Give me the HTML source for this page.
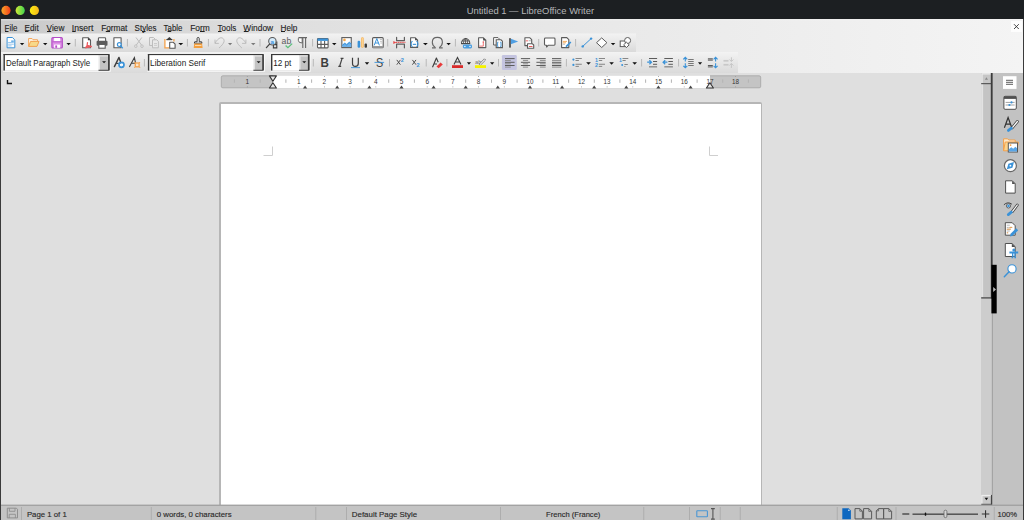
<!DOCTYPE html>
<html><head><meta charset="utf-8">
<style>
*{margin:0;padding:0;box-sizing:border-box}
html,body{width:1024px;height:520px;overflow:hidden;background:#dfdfdf;font-family:"Liberation Sans",sans-serif}
svg{position:absolute;left:0;top:0}
</style></head><body>
<svg width="1024" height="520" viewBox="0 0 1024 520" font-family="Liberation Sans" shape-rendering="auto">
<defs>
<linearGradient id="gMenu" x1="0" y1="0" x2="1" y2="0">
<stop offset="0" stop-color="#c9c9c9"/><stop offset="0.25" stop-color="#dedede"/><stop offset="0.6" stop-color="#e9e9e9"/><stop offset="1" stop-color="#f4f4f4"/>
</linearGradient>
<linearGradient id="gTb" x1="0" y1="0" x2="0" y2="1">
<stop offset="0" stop-color="#f3f3f3"/><stop offset="1" stop-color="#dadada"/>
</linearGradient>
<linearGradient id="gRed" x1="0" y1="0" x2="1" y2="0"><stop offset="0" stop-color="#f8a828"/><stop offset="1" stop-color="#f23c1c"/></linearGradient>
<linearGradient id="gGreen" x1="0" y1="0" x2="1" y2="0"><stop offset="0" stop-color="#d2ea38"/><stop offset="1" stop-color="#3fd34e"/></linearGradient>
<linearGradient id="gYellow" x1="0" y1="0" x2="1" y2="0"><stop offset="0" stop-color="#fbee10"/><stop offset="1" stop-color="#f6b71c"/></linearGradient>
</defs>
<rect x="0" y="0" width="1024" height="520" fill="#dfdfdf"/>
<rect x="0" y="0" width="1024" height="19" fill="#1c1f22"/>
<rect x="1" y="19" width="1022" height="54" fill="url(#gMenu)"/>
<rect x="1" y="33.5" width="635" height="18.5" fill="url(#gTb)"/>
<rect x="1" y="52" width="737" height="21" fill="url(#gTb)"/>
<rect x="0" y="19" width="1" height="501" fill="#3a3a3a"/>
<rect x="1023" y="19" width="1" height="501" fill="#3a3a3a"/>
<circle cx="6" cy="10.4" r="4.6" fill="url(#gRed)"/>
<circle cx="20.2" cy="10.4" r="4.6" fill="url(#gGreen)"/>
<circle cx="34.4" cy="10.4" r="4.6" fill="url(#gYellow)"/>
<text x="466.70" y="13.70" font-size="8.8" fill="#b4b6b8" font-weight="normal" font-family="Liberation Sans" textLength="127.40" lengthAdjust="spacingAndGlyphs" >Untitled 1 — LibreOffice Writer</text>
<text x="4.60" y="30.50" font-size="8.8" fill="#1e1e1e" font-weight="normal" font-family="Liberation Sans" textLength="12.80" lengthAdjust="spacingAndGlyphs" stroke="#1e1e1e" stroke-width="0.12">File</text>
<rect x="5.0" y="31" width="3.5" height="1" fill="#222"/>
<text x="24.60" y="30.50" font-size="8.8" fill="#1e1e1e" font-weight="normal" font-family="Liberation Sans" textLength="14.10" lengthAdjust="spacingAndGlyphs" stroke="#1e1e1e" stroke-width="0.12">Edit</text>
<rect x="25.0" y="31" width="3.5" height="1" fill="#222"/>
<text x="46.60" y="30.50" font-size="8.8" fill="#1e1e1e" font-weight="normal" font-family="Liberation Sans" textLength="17.80" lengthAdjust="spacingAndGlyphs" stroke="#1e1e1e" stroke-width="0.12">View</text>
<rect x="47.0" y="31" width="4.2" height="1" fill="#222"/>
<text x="71.80" y="30.50" font-size="8.8" fill="#1e1e1e" font-weight="normal" font-family="Liberation Sans" textLength="21.60" lengthAdjust="spacingAndGlyphs" stroke="#1e1e1e" stroke-width="0.12">Insert</text>
<rect x="72.2" y="31" width="3.5" height="1" fill="#222"/>
<text x="101.20" y="30.50" font-size="8.8" fill="#1e1e1e" font-weight="normal" font-family="Liberation Sans" textLength="26.20" lengthAdjust="spacingAndGlyphs" stroke="#1e1e1e" stroke-width="0.12">Format</text>
<rect x="105.8" y="31" width="4.2" height="1" fill="#222"/>
<text x="134.60" y="30.50" font-size="8.8" fill="#1e1e1e" font-weight="normal" font-family="Liberation Sans" textLength="21.80" lengthAdjust="spacingAndGlyphs" stroke="#1e1e1e" stroke-width="0.12">Styles</text>
<rect x="142.0" y="31" width="3.5" height="1" fill="#222"/>
<text x="163.60" y="30.50" font-size="8.8" fill="#1e1e1e" font-weight="normal" font-family="Liberation Sans" textLength="18.80" lengthAdjust="spacingAndGlyphs" stroke="#1e1e1e" stroke-width="0.12">Table</text>
<rect x="167.6" y="31" width="3.6" height="1" fill="#222"/>
<text x="190.20" y="30.50" font-size="8.8" fill="#1e1e1e" font-weight="normal" font-family="Liberation Sans" textLength="19.60" lengthAdjust="spacingAndGlyphs" stroke="#1e1e1e" stroke-width="0.12">Form</text>
<rect x="200.0" y="31" width="4.7" height="1" fill="#222"/>
<text x="217.60" y="30.50" font-size="8.8" fill="#1e1e1e" font-weight="normal" font-family="Liberation Sans" textLength="18.80" lengthAdjust="spacingAndGlyphs" stroke="#1e1e1e" stroke-width="0.12">Tools</text>
<rect x="218.0" y="31" width="3.6" height="1" fill="#222"/>
<text x="243.35" y="30.50" font-size="8.8" fill="#1e1e1e" font-weight="normal" font-family="Liberation Sans" textLength="29.75" lengthAdjust="spacingAndGlyphs" stroke="#1e1e1e" stroke-width="0.12">Window</text>
<rect x="243.8" y="31" width="4.8" height="1" fill="#222"/>
<text x="280.60" y="30.50" font-size="8.8" fill="#1e1e1e" font-weight="normal" font-family="Liberation Sans" textLength="16.80" lengthAdjust="spacingAndGlyphs" stroke="#1e1e1e" stroke-width="0.12">Help</text>
<rect x="281.0" y="31" width="4.0" height="1" fill="#222"/>
<rect x="219" y="102" width="543" height="405" rx="2" fill="#b6b6b6"/>
<rect x="221" y="104" width="540" height="401" fill="#ffffff"/>
<path d="M263.5 155.5H272.5V146.5" fill="none" stroke="#cfcfcf" stroke-width="1"/>
<path d="M718 155.5H709.5V146.5" fill="none" stroke="#cfcfcf" stroke-width="1"/>
<rect x="221.3" y="75.8" width="539.4" height="12" rx="1.5" fill="#c4c4c4" stroke="#9e9e9e" stroke-width="0.7"/>
<rect x="273" y="75.4" width="437" height="12.8" fill="#ffffff"/>
<rect x="233.9" y="79.4" width="1" height="3.4" fill="#b4b4b4"/>
<text x="245.50" y="83.80" font-size="7.2" fill="#333" font-weight="normal" font-family="Liberation Sans" textLength="3.60" lengthAdjust="spacingAndGlyphs" >1</text>
<rect x="246.9" y="76" width="0.8" height="1" fill="#9a9a9a"/><rect x="246.9" y="86.4" width="0.8" height="1" fill="#9a9a9a"/>
<rect x="259.7" y="79.4" width="1" height="3.4" fill="#b4b4b4"/>
<rect x="285.4" y="79.4" width="1" height="3.4" fill="#b4b4b4"/>
<text x="296.90" y="83.80" font-size="7.2" fill="#333" font-weight="normal" font-family="Liberation Sans" textLength="3.60" lengthAdjust="spacingAndGlyphs" >1</text>
<rect x="298.3" y="76" width="0.8" height="1" fill="#9a9a9a"/><rect x="298.3" y="86.4" width="0.8" height="1" fill="#9a9a9a"/>
<rect x="311.1" y="79.4" width="1" height="3.4" fill="#b4b4b4"/>
<text x="322.60" y="83.80" font-size="7.2" fill="#333" font-weight="normal" font-family="Liberation Sans" textLength="3.60" lengthAdjust="spacingAndGlyphs" >2</text>
<rect x="324.0" y="76" width="0.8" height="1" fill="#9a9a9a"/><rect x="324.0" y="86.4" width="0.8" height="1" fill="#9a9a9a"/>
<rect x="336.8" y="79.4" width="1" height="3.4" fill="#b4b4b4"/>
<text x="348.30" y="83.80" font-size="7.2" fill="#333" font-weight="normal" font-family="Liberation Sans" textLength="3.60" lengthAdjust="spacingAndGlyphs" >3</text>
<rect x="349.7" y="76" width="0.8" height="1" fill="#9a9a9a"/><rect x="349.7" y="86.4" width="0.8" height="1" fill="#9a9a9a"/>
<rect x="362.5" y="79.4" width="1" height="3.4" fill="#b4b4b4"/>
<text x="374.00" y="83.80" font-size="7.2" fill="#333" font-weight="normal" font-family="Liberation Sans" textLength="3.60" lengthAdjust="spacingAndGlyphs" >4</text>
<rect x="375.4" y="76" width="0.8" height="1" fill="#9a9a9a"/><rect x="375.4" y="86.4" width="0.8" height="1" fill="#9a9a9a"/>
<rect x="388.2" y="79.4" width="1" height="3.4" fill="#b4b4b4"/>
<text x="399.70" y="83.80" font-size="7.2" fill="#333" font-weight="normal" font-family="Liberation Sans" textLength="3.60" lengthAdjust="spacingAndGlyphs" >5</text>
<rect x="401.1" y="76" width="0.8" height="1" fill="#9a9a9a"/><rect x="401.1" y="86.4" width="0.8" height="1" fill="#9a9a9a"/>
<rect x="413.9" y="79.4" width="1" height="3.4" fill="#b4b4b4"/>
<text x="425.40" y="83.80" font-size="7.2" fill="#333" font-weight="normal" font-family="Liberation Sans" textLength="3.60" lengthAdjust="spacingAndGlyphs" >6</text>
<rect x="426.8" y="76" width="0.8" height="1" fill="#9a9a9a"/><rect x="426.8" y="86.4" width="0.8" height="1" fill="#9a9a9a"/>
<rect x="439.6" y="79.4" width="1" height="3.4" fill="#b4b4b4"/>
<text x="451.10" y="83.80" font-size="7.2" fill="#333" font-weight="normal" font-family="Liberation Sans" textLength="3.60" lengthAdjust="spacingAndGlyphs" >7</text>
<rect x="452.5" y="76" width="0.8" height="1" fill="#9a9a9a"/><rect x="452.5" y="86.4" width="0.8" height="1" fill="#9a9a9a"/>
<rect x="465.2" y="79.4" width="1" height="3.4" fill="#b4b4b4"/>
<text x="476.80" y="83.80" font-size="7.2" fill="#333" font-weight="normal" font-family="Liberation Sans" textLength="3.60" lengthAdjust="spacingAndGlyphs" >8</text>
<rect x="478.2" y="76" width="0.8" height="1" fill="#9a9a9a"/><rect x="478.2" y="86.4" width="0.8" height="1" fill="#9a9a9a"/>
<rect x="491.0" y="79.4" width="1" height="3.4" fill="#b4b4b4"/>
<text x="502.50" y="83.80" font-size="7.2" fill="#333" font-weight="normal" font-family="Liberation Sans" textLength="3.60" lengthAdjust="spacingAndGlyphs" >9</text>
<rect x="503.9" y="76" width="0.8" height="1" fill="#9a9a9a"/><rect x="503.9" y="86.4" width="0.8" height="1" fill="#9a9a9a"/>
<rect x="516.6" y="79.4" width="1" height="3.4" fill="#b4b4b4"/>
<text x="526.50" y="83.80" font-size="7.2" fill="#333" font-weight="normal" font-family="Liberation Sans" textLength="7.00" lengthAdjust="spacingAndGlyphs" >10</text>
<rect x="529.6" y="76" width="0.8" height="1" fill="#9a9a9a"/><rect x="529.6" y="86.4" width="0.8" height="1" fill="#9a9a9a"/>
<rect x="542.4" y="79.4" width="1" height="3.4" fill="#b4b4b4"/>
<text x="552.20" y="83.80" font-size="7.2" fill="#333" font-weight="normal" font-family="Liberation Sans" textLength="7.00" lengthAdjust="spacingAndGlyphs" >11</text>
<rect x="555.3" y="76" width="0.8" height="1" fill="#9a9a9a"/><rect x="555.3" y="86.4" width="0.8" height="1" fill="#9a9a9a"/>
<rect x="568.1" y="79.4" width="1" height="3.4" fill="#b4b4b4"/>
<text x="577.90" y="83.80" font-size="7.2" fill="#333" font-weight="normal" font-family="Liberation Sans" textLength="7.00" lengthAdjust="spacingAndGlyphs" >12</text>
<rect x="581.0" y="76" width="0.8" height="1" fill="#9a9a9a"/><rect x="581.0" y="86.4" width="0.8" height="1" fill="#9a9a9a"/>
<rect x="593.8" y="79.4" width="1" height="3.4" fill="#b4b4b4"/>
<text x="603.60" y="83.80" font-size="7.2" fill="#333" font-weight="normal" font-family="Liberation Sans" textLength="7.00" lengthAdjust="spacingAndGlyphs" >13</text>
<rect x="606.7" y="76" width="0.8" height="1" fill="#9a9a9a"/><rect x="606.7" y="86.4" width="0.8" height="1" fill="#9a9a9a"/>
<rect x="619.4" y="79.4" width="1" height="3.4" fill="#b4b4b4"/>
<text x="629.30" y="83.80" font-size="7.2" fill="#333" font-weight="normal" font-family="Liberation Sans" textLength="7.00" lengthAdjust="spacingAndGlyphs" >14</text>
<rect x="632.4" y="76" width="0.8" height="1" fill="#9a9a9a"/><rect x="632.4" y="86.4" width="0.8" height="1" fill="#9a9a9a"/>
<rect x="645.1" y="79.4" width="1" height="3.4" fill="#b4b4b4"/>
<text x="655.00" y="83.80" font-size="7.2" fill="#333" font-weight="normal" font-family="Liberation Sans" textLength="7.00" lengthAdjust="spacingAndGlyphs" >15</text>
<rect x="658.1" y="76" width="0.8" height="1" fill="#9a9a9a"/><rect x="658.1" y="86.4" width="0.8" height="1" fill="#9a9a9a"/>
<rect x="670.9" y="79.4" width="1" height="3.4" fill="#b4b4b4"/>
<text x="680.70" y="83.80" font-size="7.2" fill="#333" font-weight="normal" font-family="Liberation Sans" textLength="7.00" lengthAdjust="spacingAndGlyphs" >16</text>
<rect x="683.8" y="76" width="0.8" height="1" fill="#9a9a9a"/><rect x="683.8" y="86.4" width="0.8" height="1" fill="#9a9a9a"/>
<rect x="696.6" y="79.4" width="1" height="3.4" fill="#b4b4b4"/>
<text x="706.40" y="83.80" font-size="7.2" fill="#333" font-weight="normal" font-family="Liberation Sans" textLength="7.00" lengthAdjust="spacingAndGlyphs" >17</text>
<rect x="722.2" y="79.4" width="1" height="3.4" fill="#b4b4b4"/>
<text x="732.10" y="83.80" font-size="7.2" fill="#333" font-weight="normal" font-family="Liberation Sans" textLength="7.00" lengthAdjust="spacingAndGlyphs" >18</text>
<rect x="735.2" y="76" width="0.8" height="1" fill="#9a9a9a"/><rect x="735.2" y="86.4" width="0.8" height="1" fill="#9a9a9a"/>
<rect x="747.9" y="79.4" width="1" height="3.4" fill="#b4b4b4"/>
<path d="M303.0 88.4L305.1 85.6L307.2 88.4Z" fill="#444"/>
<path d="M335.1 88.4L337.2 85.6L339.3 88.4Z" fill="#444"/>
<path d="M367.3 88.4L369.4 85.6L371.5 88.4Z" fill="#444"/>
<path d="M399.4 88.4L401.5 85.6L403.6 88.4Z" fill="#444"/>
<path d="M431.5 88.4L433.6 85.6L435.7 88.4Z" fill="#444"/>
<path d="M463.6 88.4L465.7 85.6L467.8 88.4Z" fill="#444"/>
<path d="M495.7 88.4L497.8 85.6L499.9 88.4Z" fill="#444"/>
<path d="M527.9 88.4L530.0 85.6L532.1 88.4Z" fill="#444"/>
<path d="M560.0 88.4L562.1 85.6L564.2 88.4Z" fill="#444"/>
<path d="M592.1 88.4L594.2 85.6L596.3 88.4Z" fill="#444"/>
<path d="M624.2 88.4L626.3 85.6L628.4 88.4Z" fill="#444"/>
<path d="M656.3 88.4L658.4 85.6L660.5 88.4Z" fill="#444"/>
<path d="M688.5 88.4L690.6 85.6L692.7 88.4Z" fill="#444"/>
<path d="M269.4 75.9H276.4L272.9 81.3Z M269.4 88H276.4L272.9 82.8Z" fill="#e6e6e6" stroke="#333" stroke-width="1.1" stroke-linejoin="round"/>
<path d="M706.4 88H713.4L709.9 82.8Z" fill="#e6e6e6" stroke="#333" stroke-width="1.1" stroke-linejoin="round"/>
<path d="M7.5 80V83.5H12" fill="none" stroke="#111" stroke-width="1.4"/>
<rect x="981" y="73" width="12" height="432" fill="#cdcdcd"/>
<rect x="991.8" y="73" width="1.2" height="432" fill="#a4a4a4"/>
<rect x="981.2" y="73" width="11.4" height="225.7" fill="#c4c4c4"/>
<rect x="981.2" y="84" width="1.9" height="213" fill="#e2e2e2"/>
<rect x="981.2" y="297" width="10" height="1.7" fill="#6a6a6a"/>
<rect x="981.4" y="73.2" width="9.6" height="9.8" fill="#eeeeee"/><rect x="982.6" y="74.5" width="8.4" height="8.5" fill="#c6c6c6"/>
<rect x="981.2" y="83.1" width="10" height="1.1" fill="#505050"/>
<path d="M984.9 79.8L986.4 77.3L988 79.8Z" fill="#8a8a8a"/>
<rect x="990.8" y="73" width="1.8" height="225.7" fill="#3c3c3c"/>
<rect x="981.3" y="494.9" width="10.6" height="9.9" fill="#eeeeee"/><rect x="982.5" y="496.1" width="8.5" height="7.7" fill="#c8c8c8"/>
<rect x="981.3" y="503.8" width="10.6" height="1" fill="#333"/><rect x="990.9" y="494.9" width="1" height="9.9" fill="#333"/>
<path d="M984.6 497.8H988.2L986.4 500.2Z" fill="#111"/>
<rect x="993" y="73" width="30" height="432" fill="#c2c2c2"/>
<rect x="991.4" y="264.8" width="5.3" height="48.6" fill="#000"/>
<path d="M993.2 287L996 289.5L993.2 292Z" fill="#bbb"/>
<rect x="1" y="505" width="1022" height="15" fill="#c4c4c4"/>
<rect x="1" y="504.6" width="1022" height="1.3" fill="#a0a0a0"/>
<rect x="21.00" y="507" width="1" height="13" fill="#adadad"/>
<rect x="150.80" y="507" width="1" height="13" fill="#adadad"/>
<rect x="315.30" y="507" width="1" height="13" fill="#adadad"/>
<rect x="346.00" y="507" width="1" height="13" fill="#adadad"/>
<rect x="500.00" y="507" width="1" height="13" fill="#adadad"/>
<rect x="643.25" y="507" width="1" height="13" fill="#adadad"/>
<rect x="689.00" y="507" width="1" height="13" fill="#adadad"/>
<rect x="719.75" y="507" width="1" height="13" fill="#adadad"/>
<rect x="739.75" y="507" width="1" height="13" fill="#adadad"/>
<rect x="836.75" y="507" width="1" height="13" fill="#adadad"/>
<rect x="895.50" y="507" width="1" height="13" fill="#adadad"/>
<rect x="993.75" y="507" width="1" height="13" fill="#adadad"/>
<text x="26.90" y="517.10" font-size="7.9" fill="#2a2a2a" font-weight="normal" font-family="Liberation Sans" textLength="39.90" lengthAdjust="spacingAndGlyphs" stroke="#2a2a2a" stroke-width="0.14">Page 1 of 1</text>
<text x="156.80" y="517.10" font-size="7.9" fill="#2a2a2a" font-weight="normal" font-family="Liberation Sans" textLength="74.80" lengthAdjust="spacingAndGlyphs" stroke="#2a2a2a" stroke-width="0.14">0 words, 0 characters</text>
<text x="351.85" y="517.10" font-size="7.9" fill="#2a2a2a" font-weight="normal" font-family="Liberation Sans" textLength="65.30" lengthAdjust="spacingAndGlyphs" stroke="#2a2a2a" stroke-width="0.14">Default Page Style</text>
<text x="546.10" y="517.10" font-size="7.9" fill="#2a2a2a" font-weight="normal" font-family="Liberation Sans" textLength="54.30" lengthAdjust="spacingAndGlyphs" stroke="#2a2a2a" stroke-width="0.14">French (France)</text>
<text x="997.60" y="517.10" font-size="7.9" fill="#2a2a2a" font-weight="normal" font-family="Liberation Sans" textLength="19.55" lengthAdjust="spacingAndGlyphs" stroke="#2a2a2a" stroke-width="0.14">100%</text>
<g transform="translate(6.6,37)"><path d="M0.5 0.5H5.8L8.2 2.9V10.8H0.5Z" fill="#fff" stroke="#3a92d8" stroke-width="1"/><rect x="1.6" y="1.4" width="2.4" height="3.6" fill="#fff"/><path d="M1.5 5.5H7.2M1.5 7.2H7.2M1.5 8.9H5" stroke="#8cc0ea" stroke-width="0.9"/><rect x="4.6" y="3.4" width="2.6" height="1.6" fill="#6aaee6"/></g>
<path d="M19.90 42.90H24.30L22.10 45.30Z" fill="#111"/>
<g transform="translate(28,37.9)"><path d="M0.6 8.5V0.6H4L5 1.8H9.5V3.3" fill="#fdf2e2" stroke="#f3a860" stroke-width="1"/><path d="M0.6 8.5L2.6 3.5H11L9 8.5Z" fill="#f7d98a" stroke="#f0a050" stroke-width="1" stroke-linejoin="round"/></g>
<path d="M43.00 42.90H47.40L45.20 45.30Z" fill="#111"/>
<g transform="translate(51.3,37)"><rect x="0.6" y="0.6" width="10.4" height="10.4" rx="1" fill="#de93e6" stroke="#b34ec5" stroke-width="1.2"/><rect x="2.8" y="1" width="6" height="3.2" fill="#fff"/><rect x="2.8" y="7.6" width="6" height="3.2" fill="#fff"/><rect x="4" y="8.4" width="1.8" height="2.4" fill="#b34ec5"/><rect x="1.2" y="4.4" width="9.2" height="0.9" fill="#b34ec5"/></g>
<path d="M66.40 42.90H70.80L68.60 45.30Z" fill="#111"/>
<rect x="74.80" y="39" width="1" height="7.5" fill="#b8b8b8"/>
<g transform="translate(82.1,37.1)"><path d="M0.6 0.6H6L8.4 3V10.6H0.6Z" fill="#fff" stroke="#5b5b5b" stroke-width="1.1" stroke-linejoin="round"/><path d="M5.8 0.5V3.2H8.5Z" fill="#3d3d3d"/><path d="M5.4 5.6L5 8.4L3.6 10.6M5 8.4L9.2 9.4M3.6 10.6L9.2 9.4" fill="none" stroke="#ea5a5e" stroke-width="1.3" stroke-linecap="round" stroke-linejoin="round"/></g>
<g transform="translate(96.2,37.2)"><rect x="2.2" y="0.6" width="7.2" height="4" rx="0.8" fill="#fff" stroke="#5b5b5b" stroke-width="1.1"/><rect x="0.4" y="3.6" width="10.9" height="5" rx="1" fill="#5b5b5b"/><rect x="2.6" y="7.2" width="6.4" height="3.8" fill="#fff" stroke="#5b5b5b" stroke-width="1.1"/></g>
<g transform="translate(113.3,37.1)"><path d="M0.6 0.6H7.8V10.6H0.6Z" fill="#fff" stroke="#5b5b5b" stroke-width="1.1" stroke-linejoin="round"/><circle cx="6" cy="7.5" r="1.9" fill="#fff" stroke="#3a92d8" stroke-width="1.2"/><path d="M7.3 8.9L9.2 10.8" stroke="#3a92d8" stroke-width="1.3" stroke-linecap="round"/></g>
<rect x="126.90" y="39" width="1" height="7.5" fill="#b8b8b8"/>
<g transform="translate(134,37)"><path d="M2 0.5L7.5 8M7.8 0.5L2.3 8" stroke="#bdbdbd" stroke-width="1"/><circle cx="1.8" cy="9.2" r="1.3" fill="none" stroke="#bdbdbd" stroke-width="0.9"/><circle cx="8" cy="9.2" r="1.3" fill="none" stroke="#bdbdbd" stroke-width="0.9"/></g>
<g transform="translate(149,37)"><path d="M0.5 0.5H4.5L6 2V8.5H0.5Z" fill="none" stroke="#bdbdbd" stroke-width="1"/><path d="M3.5 2.8H7.8L9.4 4.4V10.8H3.5Z" fill="#e9e9e9" stroke="#bdbdbd" stroke-width="1"/><path d="M5 6.5H8M5 8.3H8" stroke="#bdbdbd" stroke-width="0.7"/></g>
<rect x="164.8" y="38.8" width="9.2" height="9.2" fill="#fff"/>
<path d="M164.9 38.9V47.9H169.4M173.9 38.9V41.6" fill="none" stroke="#f3a04a" stroke-width="1.3"/>
<path d="M166.6 39.6L169.4 37.1L172.2 39.6Z" fill="#3d3d3d"/><rect x="166.4" y="39" width="6" height="1.2" fill="#3d3d3d"/>
<path d="M169.7 42.3H173.3L175.1 44.1V48.3H169.7Z" fill="#fff" stroke="#555" stroke-width="1.1" stroke-linejoin="round"/>
<path d="M178.40 42.90H183.20L180.80 45.30Z" fill="#111"/>
<rect x="186.90" y="39" width="1" height="7.5" fill="#b8b8b8"/>
<g transform="translate(194,37)"><path d="M3.1 4.8V1.4Q3.1 0.5 4.15 0.5Q5.2 0.5 5.2 1.4V4.8H7.6L8 6.2H0.3L0.7 4.8Z" fill="#fff" stroke="#3d3d3d" stroke-width="1" stroke-linejoin="round"/><path d="M0.2 6.6H8.1L8.6 10.9H-0.3Z" fill="#f4a040"/><rect x="1" y="8" width="6.4" height="0.9" fill="#fde0b8"/></g>
<rect x="207.90" y="39" width="1" height="7.5" fill="#b8b8b8"/>
<g transform="translate(214,37)"><path d="M1 6.2C2.6 3.4 4.5 1.5 6.2 0.9C8.8 0.2 10.6 2.5 10 4.8C9.6 6.5 7.4 9 5 11" fill="none" stroke="#bdbdbd" stroke-width="1"/><path d="M1 2.6V6.4H4.8" fill="none" stroke="#bdbdbd" stroke-width="1"/></g>
<path d="M228.00 42.90H232.20L230.10 45.30Z" fill="#7a7a7a"/>
<g transform="translate(236.3,37)"><path d="M9.6 6.2C8 3.4 6.1 1.5 4.4 0.9C1.8 0.2 0 2.5 0.6 4.8C1 6.5 3.2 9 5.6 11" fill="none" stroke="#bdbdbd" stroke-width="1"/><path d="M9.6 2.6V6.4H5.8" fill="none" stroke="#bdbdbd" stroke-width="1"/></g>
<path d="M251.00 42.90H255.50L253.25 45.30Z" fill="#7a7a7a"/>
<rect x="259.50" y="39" width="1" height="7.5" fill="#b8b8b8"/>
<path d="M276.8 41.6V47.9H273.4V44.6H276.8" fill="none" stroke="#3d3d3d" stroke-width="1.1"/>
<circle cx="272.4" cy="41.2" r="3.7" fill="#d6ebfa" stroke="#555" stroke-width="1.05"/>
<text x="270.6" y="43.6" font-size="6.2" font-weight="bold" fill="#3a8fd8" font-family="Liberation Sans">a</text>
<path d="M269.6 44.1L266.4 47.6" stroke="#444" stroke-width="1.3" stroke-linecap="round"/>
<text x="281.6" y="43.8" font-size="9" fill="#5a5a5a" font-family="Liberation Sans" textLength="9.6" lengthAdjust="spacingAndGlyphs">ab</text>
<path d="M285.6 45.6L287.9 47.7L292.2 43.6" fill="none" stroke="#5cbf7a" stroke-width="1.3"/>
<path d="M302.2 37.6H298.9Q298.3 37.6 298.3 40.3Q298.3 43 302.2 43Z" fill="#fff" stroke="#666" stroke-width="1"/>
<path d="M298.6 37.6H307M302.8 37.6V48M305.6 37.6V48" fill="none" stroke="#666" stroke-width="1.1"/>
<rect x="312.10" y="39" width="1" height="7.5" fill="#b8b8b8"/>
<g transform="translate(316.9,37.9)"><rect x="0.6" y="0.6" width="10.6" height="9.4" rx="0.8" fill="#fff" stroke="#5b5b5b" stroke-width="1.1"/><rect x="0.6" y="0.6" width="10.6" height="2.4" fill="#3a92d8"/><path d="M4.1 3V10M7.7 3V10M0.6 6.5H11.2" stroke="#5b5b5b" stroke-width="1.1"/></g>
<path d="M332.00 42.90H336.50L334.25 45.30Z" fill="#111"/>
<g transform="translate(341.25,37)"><rect x="0.6" y="0.6" width="9.4" height="10" fill="#fff" stroke="#5b5b5b" stroke-width="1.1"/><circle cx="3.2" cy="2.9" r="1.3" fill="#f6a84a"/><path d="M1 10V7.6L3.6 5.6L5.4 7L8 4.6L10 6.2V10Z" fill="#6fb2ea"/><path d="M1 8.5L3.6 6.6L5.4 8L8 5.6L10 7.2" fill="none" stroke="#3a92d8" stroke-width="0.9"/></g>
<g transform="translate(357.3,37)"><rect x="0.3" y="3.8" width="2.6" height="7" rx="1.2" fill="#3a92d8"/><rect x="3.8" y="0.2" width="2.6" height="10.6" rx="1.2" fill="#f7b35a"/><rect x="4.4" y="0.8" width="1.4" height="9.4" fill="#fbd28f"/><rect x="7.3" y="6.6" width="2.4" height="4.2" rx="1" fill="#3d3d3d"/></g>
<g transform="translate(372,37)"><rect x="0.6" y="0.6" width="10.6" height="10.2" rx="1" fill="#fff" stroke="#5b5b5b" stroke-width="1.1"/><rect x="0.6" y="9" width="10.6" height="1.8" fill="#9a9a9a"/><path d="M2.2 8.4L4.8 1.5L7.4 8.4M3.2 6H6.4" fill="none" stroke="#3a92d8" stroke-width="1"/><path d="M7.8 2.5H10M8 4.3H10M8.4 6H10" stroke="#999" stroke-width="0.6"/></g>
<rect x="387.20" y="39" width="1" height="7.5" fill="#b8b8b8"/>
<path d="M396.6 37.4V40.6H404.4V37.4M396.6 47.8V44.2H404.4V47.8" fill="none" stroke="#5e5e5e" stroke-width="1.2" stroke-linecap="round" stroke-linejoin="round"/>
<path d="M393.3 40.9L396.4 42.4L393.3 43.9Z" fill="#e64848"/><path d="M396 42.4H405.4" stroke="#e85454" stroke-width="1.1" stroke-dasharray="1.4 0.7"/>
<g transform="translate(410,37.2)"><path d="M0.6 0.6H5.3L7.6 2.9V10.2H0.6Z" fill="#fff" stroke="#5b5b5b" stroke-width="1.1" stroke-linejoin="round"/><path d="M5.1 0.5V3.1H7.7Z" fill="#3d3d3d"/><path d="M2.6 4.1Q1.1 4.5 1.1 6.8Q1.1 9.1 2.6 9.5M6.4 4.1Q7.9 4.5 7.9 6.8Q7.9 9.1 6.4 9.5" fill="none" stroke="#3a92d8" stroke-width="1.1"/><rect x="2.8" y="6.6" width="3.4" height="1.1" fill="#3a92d8"/></g>
<path d="M423.00 42.90H427.80L425.40 45.30Z" fill="#111"/>
<path d="M435.4 47.6Q432.3 45.6 432.3 42.3Q432.3 37.4 437.35 37.4Q442.4 37.4 442.4 42.3Q442.4 45.6 439.3 47.6" fill="none" stroke="#666" stroke-width="1.1"/>
<path d="M432 47.9H435.7M439 47.9H442.7" stroke="#666" stroke-width="1.2"/>
<path d="M446.40 42.90H450.80L448.60 45.30Z" fill="#111"/>
<rect x="454.90" y="39" width="1" height="7.5" fill="#b8b8b8"/>
<path d="M461.5 43.6A4.15 5.1 0 0 1 469.8 43.6Z" fill="#fff" stroke="#4a4a4a" stroke-width="1.1" stroke-linejoin="round"/>
<path d="M463.6 43.6Q463.6 38.8 465.65 38.5Q467.7 38.8 467.7 43.6M465.65 38.5V43.6M461.9 41H469.4" fill="none" stroke="#4a4a4a" stroke-width="0.9"/>
<rect x="462.9" y="44.4" width="9.1" height="4" rx="1.3" fill="#4a9ee0"/>
<circle cx="464.9" cy="46.4" r="0.75" fill="#fff"/><circle cx="470" cy="46.4" r="0.75" fill="#fff"/>
<g transform="translate(478,37.2)"><path d="M0.6 0.6H5.4L7.8 3V10.4H0.6Z" fill="#fff" stroke="#5b5b5b" stroke-width="1.1" stroke-linejoin="round"/><path d="M5.2 0.5V3.2H7.9Z" fill="#3d3d3d"/><path d="M1.2 8.9H5.3V4.6" fill="none" stroke="#ea5454" stroke-width="0.8"/><circle cx="5.3" cy="4.8" r="0.7" fill="#ea5454"/></g>
<g transform="translate(493,37)"><path d="M0.6 0.6H5L6 1.6V8H0.6Z" fill="#fff" stroke="#5b5b5b" stroke-width="1"/><path d="M3.2 2.8H8L9.4 4.2V10.6H3.2Z" fill="#fff" stroke="#5b5b5b" stroke-width="1.1"/><path d="M5.4 5.2H4.6V9.6H5.4M7.2 5.2H8V9.6H7.2" fill="none" stroke="#3a92d8" stroke-width="0.9"/></g>
<g transform="translate(509.1,38.2)"><rect x="0" y="0" width="1.8" height="9.4" fill="#505050"/><path d="M1.8 0.5L9.1 3.3L1.8 6.1Z" fill="#4f9fe3"/></g>
<g transform="translate(524.3,37.2)"><path d="M0.6 0.6H5.6L7.4 2.4V8.4H0.6Z" fill="#fff" stroke="#5b5b5b" stroke-width="1.1" stroke-linejoin="round"/><rect x="1.4" y="3.2" width="2.4" height="0.9" fill="#e85a5a"/><rect x="4.4" y="3.2" width="2.2" height="0.8" fill="#999"/><path d="M3.2 6.6H8.2L9.4 7.8V11H3.2Z" fill="#fff" stroke="#5b5b5b" stroke-width="1.1" stroke-linejoin="round"/><rect x="4.6" y="8.8" width="3.6" height="1" fill="#e85a5a"/></g>
<rect x="538.20" y="39" width="1" height="7.5" fill="#b8b8b8"/>
<g transform="translate(543.9,37.4)"><path d="M1.6 0.6H10.2Q11.1 0.6 11.1 1.5V6.9Q11.1 7.8 10.2 7.8H4.4L2.7 9.6L2.6 7.8H1.6Q0.6 7.8 0.6 6.9V1.5Q0.6 0.6 1.6 0.6Z" fill="#fff" stroke="#5b5b5b" stroke-width="1.1" stroke-linejoin="round"/></g>
<g transform="translate(561,37)"><path d="M0.6 0.6H5.8L7.8 2.6V10.6H0.6Z" fill="#fff" stroke="#5b5b5b" stroke-width="1.1" stroke-linejoin="round"/><path d="M1.8 4.4H6M1.8 5.8H5" stroke="#f29b39" stroke-width="0.8"/><path d="M1.8 7.2H4" stroke="#9a9a9a" stroke-width="0.7"/><path d="M4.6 10.4L5 8.6L9.2 4.4L10.4 5.6L6.2 9.8Z" fill="#3a92d8"/></g>
<rect x="575.10" y="39" width="1" height="7.5" fill="#b8b8b8"/>
<g transform="translate(581.5,37.4)"><path d="M1.2 9L9.6 1.2" stroke="#3a92d8" stroke-width="1"/><circle cx="1.2" cy="9" r="1.2" fill="#3a92d8"/><circle cx="9.6" cy="1.2" r="1.2" fill="#3a92d8"/></g>
<g transform="translate(596,37.4)"><path d="M5.7 0.5L10.9 5.3L5.7 10.1L0.5 5.3Z" fill="#fff" stroke="#5b5b5b" stroke-width="1"/></g>
<path d="M610.80 42.90H615.30L613.05 45.30Z" fill="#111"/>
<g transform="translate(619.6,37.2)"><rect x="0.6" y="3.8" width="5.4" height="5.6" fill="#fff" stroke="#5b5b5b" stroke-width="1"/><circle cx="8" cy="3.3" r="3" fill="#fff" stroke="#5b5b5b" stroke-width="1"/><path d="M6.8 5L9.6 7.6L6.8 10.4L4 7.6Z" fill="#fff" stroke="#5b5b5b" stroke-width="1"/></g>
<path d="M109.75 54.5H110.75V71.8H3.0V70.8H109.75Z" fill="#fafafa"/>
<rect x="4.5" y="55" width="104.25" height="15.2" fill="#fff"/>
<rect x="3.5" y="70" width="95.0" height="0.8" fill="#ececec"/>
<rect x="98.5" y="55" width="9.650000000000006" height="14.8" fill="#e8e8e8"/>
<rect x="100.0" y="56.5" width="8.150000000000006" height="13.3" fill="#c3c3c3"/>
<rect x="3.5" y="54" width="105.75" height="1.1" fill="#383838"/>
<rect x="3.5" y="54" width="1.4" height="16.6" fill="#383838"/>
<path d="M108.05 54H108.75Q109.75 54 109.75 55V69.8Q109.75 70.8 108.75 70.8H98.5V69.8H108.05Z" fill="#383838"/>
<path d="M102.075 61.3H106.075L104.075 63.2Z" fill="#1a1a1a"/>
<text x="6.10" y="66.3" font-size="8.6" fill="#222" font-family="Liberation Sans" textLength="84.05" lengthAdjust="spacingAndGlyphs">Default Paragraph Style</text>
<path d="M263.9 54.5H264.9V71.8H147.4V70.8H263.9Z" fill="#fafafa"/>
<rect x="148.9" y="55" width="113.99999999999997" height="15.2" fill="#fff"/>
<rect x="147.9" y="70" width="105.5" height="0.8" fill="#ececec"/>
<rect x="253.4" y="55" width="8.899999999999949" height="14.8" fill="#e8e8e8"/>
<rect x="254.9" y="56.5" width="7.399999999999949" height="13.3" fill="#c3c3c3"/>
<rect x="147.9" y="54" width="115.49999999999997" height="1.1" fill="#383838"/>
<rect x="147.9" y="54" width="1.4" height="16.6" fill="#383838"/>
<path d="M262.2 54H262.9Q263.9 54 263.9 55V69.8Q263.9 70.8 262.9 70.8H253.4V69.8H262.2Z" fill="#383838"/>
<path d="M256.59999999999997 61.3H260.59999999999997L258.59999999999997 63.2Z" fill="#1a1a1a"/>
<text x="150.10" y="66.3" font-size="8.6" fill="#222" font-family="Liberation Sans" textLength="55.30" lengthAdjust="spacingAndGlyphs">Liberation Serif</text>
<path d="M309.6 54.5H310.6V71.8H270.5V70.8H309.6Z" fill="#fafafa"/>
<rect x="272" y="55" width="36.60000000000002" height="15.2" fill="#fff"/>
<rect x="271" y="70" width="28" height="0.8" fill="#ececec"/>
<rect x="299" y="55" width="9.0" height="14.8" fill="#e8e8e8"/>
<rect x="300.5" y="56.5" width="7.5" height="13.3" fill="#c3c3c3"/>
<rect x="271" y="54" width="38.10000000000002" height="1.1" fill="#383838"/>
<rect x="271" y="54" width="1.4" height="16.6" fill="#383838"/>
<path d="M307.90000000000003 54H308.6Q309.6 54 309.6 55V69.8Q309.6 70.8 308.6 70.8H299V69.8H307.90000000000003Z" fill="#383838"/>
<path d="M302.25 61.3H306.25L304.25 63.2Z" fill="#1a1a1a"/>
<text x="273.20" y="66.3" font-size="8.6" fill="#222" font-family="Liberation Sans" textLength="18.20" lengthAdjust="spacingAndGlyphs">12 pt</text>
<g transform="translate(113.8,57)"><path d="M0.6 9.6L5.2 0.4L6.6 4.4" fill="none" stroke="#3d3d3d" stroke-width="1.4" stroke-linecap="round" stroke-linejoin="round"/><path d="M2.4 6.4H5" stroke="#3d3d3d" stroke-width="1.1"/><circle cx="7.7" cy="7.8" r="2.5" fill="#fff" stroke="#3a92d8" stroke-width="1.7"/><path d="M5.2 5.2H7.4V7.2Z M10.2 10.4H8V8.4Z" fill="#3a92d8"/></g>
<g transform="translate(129,57)"><path d="M0.6 9.6L5.4 0.6L6.4 5.4M2.6 6.2H5.6" fill="none" stroke="#3d3d3d" stroke-width="1.1" stroke-linecap="round"/><rect x="6.3" y="6" width="3.8" height="3.8" fill="#fbe4c8" stroke="#f3a350" stroke-width="1.3"/><path d="M5.3 5L6.3 6M11.1 5L10.1 6M5.3 10.8L6.3 9.8M11.1 10.8L10.1 9.8" stroke="#f3a350" stroke-width="1"/></g>
<rect x="143.90" y="59" width="1" height="7.5" fill="#b8b8b8"/>
<rect x="312.80" y="59" width="1" height="7.5" fill="#b8b8b8"/>
<text x="320.6" y="66.8" font-size="12.4" font-weight="bold" fill="#3d3d3d" font-family="Liberation Sans" textLength="8.4" lengthAdjust="spacingAndGlyphs">B</text>
<path d="M339.6 66.2L342.1 58.4M338.3 66.3H341.2M340.6 58.3H343.5" fill="none" stroke="#444" stroke-width="1.2"/>
<path d="M352.5 57.8V63.2Q352.5 66.4 355.4 66.4Q358.3 66.4 358.3 63.2V57.8" fill="none" stroke="#3d3d3d" stroke-width="1.2"/>
<rect x="351" y="67.2" width="9" height="0.9" fill="#3a92d8"/>
<path d="M364.80 62.30H369.20L367.00 64.80Z" fill="#111"/>
<text x="375.9" y="67.1" font-size="12.6" fill="#3d3d3d" font-family="Liberation Sans" textLength="7.2" lengthAdjust="spacingAndGlyphs">S</text>
<rect x="374.5" y="61.9" width="9.6" height="0.9" fill="#3a92d8"/>
<rect x="389.00" y="59" width="1" height="7.5" fill="#b8b8b8"/>
<path d="M396.8 59.9L400.4 64.7M400.4 59.9L396.8 64.7" stroke="#4a4a4a" stroke-width="0.95"/>
<text x="400.8" y="62.3" font-size="5.6" font-weight="bold" fill="#3a92d8" font-family="Liberation Sans">2</text>
<path d="M412.4 59.9L416 64.7M416 59.9L412.4 64.7" stroke="#4a4a4a" stroke-width="0.95"/>
<text x="416.6" y="67.4" font-size="5.6" font-weight="bold" fill="#3a92d8" font-family="Liberation Sans">2</text>
<rect x="425.70" y="59" width="1" height="7.5" fill="#b8b8b8"/>
<g transform="translate(432,57.4)"><path d="M0.5 9.8L4.4 0.6L6.2 4.8M2 6.6H5" fill="none" stroke="#3d3d3d" stroke-width="1.1" stroke-linejoin="round"/><path d="M4.5 9.2L8.6 5.2L10.8 7.2L6.7 10.8Z" fill="#e83a3a"/></g>
<rect x="446.40" y="59" width="1" height="7.5" fill="#b8b8b8"/>
<g transform="translate(452,57)"><path d="M2 7.6L5.5 0.4L9 7.6M3.3 5H7.7" fill="none" stroke="#3d3d3d" stroke-width="1.1"/><rect x="0" y="8.2" width="11" height="2.8" fill="#d92b2b"/></g>
<path d="M466.90 62.30H471.00L468.95 64.80Z" fill="#111"/>
<g transform="translate(475,57)"><text x="0" y="6.5" font-size="5.8" fill="#777" font-family="Liberation Sans">ab</text><path d="M4.2 7.2L9.4 1.8L10.6 3L5.4 8.2Z" fill="#fff" stroke="#666" stroke-width="0.8"/><rect x="0" y="8.2" width="11" height="2.8" fill="#f5f200"/></g>
<path d="M490.00 62.30H494.30L492.15 64.80Z" fill="#111"/>
<rect x="498.00" y="59" width="1" height="7.5" fill="#b8b8b8"/>
<rect x="501.9" y="55.1" width="14.9" height="14.9" rx="1.2" fill="#c4c4e0"/>
<rect x="505.00" y="58.10" width="9.60" height="1.0" fill="#5c5c5c"/><rect x="505.00" y="59.90" width="5.80" height="1.0" fill="#8c8c8c"/><rect x="505.00" y="61.80" width="9.60" height="1.0" fill="#5c5c5c"/><rect x="505.00" y="63.30" width="5.80" height="1.0" fill="#8c8c8c"/><rect x="505.00" y="65.00" width="9.60" height="1.0" fill="#5c5c5c"/><rect x="505.00" y="66.60" width="5.80" height="1.0" fill="#8c8c8c"/>
<rect x="520.90" y="58.10" width="9.20" height="1.0" fill="#5c5c5c"/><rect x="522.90" y="59.90" width="5.20" height="1.0" fill="#8c8c8c"/><rect x="520.90" y="61.80" width="9.20" height="1.0" fill="#5c5c5c"/><rect x="522.90" y="63.30" width="5.20" height="1.0" fill="#8c8c8c"/><rect x="520.90" y="65.00" width="9.20" height="1.0" fill="#5c5c5c"/><rect x="522.90" y="66.60" width="5.20" height="1.0" fill="#8c8c8c"/>
<rect x="536.40" y="58.10" width="9.30" height="1.0" fill="#5c5c5c"/><rect x="539.90" y="59.90" width="5.80" height="1.0" fill="#8c8c8c"/><rect x="536.40" y="61.80" width="9.30" height="1.0" fill="#5c5c5c"/><rect x="539.90" y="63.30" width="5.80" height="1.0" fill="#8c8c8c"/><rect x="536.40" y="65.00" width="9.30" height="1.0" fill="#5c5c5c"/><rect x="539.90" y="66.60" width="5.80" height="1.0" fill="#8c8c8c"/>
<rect x="552.00" y="58.10" width="9.30" height="1.0" fill="#5c5c5c"/><rect x="552.00" y="59.90" width="9.30" height="1.0" fill="#8c8c8c"/><rect x="552.00" y="61.80" width="9.30" height="1.0" fill="#5c5c5c"/><rect x="552.00" y="63.30" width="9.30" height="1.0" fill="#8c8c8c"/><rect x="552.00" y="65.00" width="9.30" height="1.0" fill="#5c5c5c"/><rect x="552.00" y="66.60" width="9.30" height="1.0" fill="#8c8c8c"/>
<rect x="565.90" y="59" width="1" height="7.5" fill="#b8b8b8"/>
<circle cx="573.4" cy="59.6" r="1.1" fill="#3a92d8"/><circle cx="573.4" cy="64.9" r="1.1" fill="#3a92d8"/>
<rect x="575.50" y="58.00" width="6.30" height="0.8" fill="#6e6e6e"/><rect x="575.50" y="60.10" width="3.40" height="0.8" fill="#6e6e6e"/><rect x="575.50" y="63.80" width="6.30" height="0.8" fill="#6e6e6e"/><rect x="575.50" y="65.90" width="3.40" height="0.8" fill="#6e6e6e"/>
<path d="M586.20 62.30H590.80L588.50 64.80Z" fill="#111"/>
<text x="595" y="62" font-size="6" font-weight="bold" fill="#3a92d8" font-family="Liberation Sans" textLength="3" lengthAdjust="spacingAndGlyphs">1</text><text x="595" y="67.4" font-size="6" font-weight="bold" fill="#3a92d8" font-family="Liberation Sans" textLength="3" lengthAdjust="spacingAndGlyphs">2</text>
<rect x="598.80" y="58.00" width="6.20" height="0.8" fill="#6e6e6e"/><rect x="598.80" y="60.10" width="3.40" height="0.8" fill="#6e6e6e"/><rect x="598.80" y="63.80" width="6.20" height="0.8" fill="#6e6e6e"/><rect x="598.80" y="65.90" width="3.40" height="0.8" fill="#6e6e6e"/>
<path d="M609.30 62.30H613.90L611.60 64.80Z" fill="#111"/>
<text x="619" y="62" font-size="6" font-weight="bold" fill="#3a92d8" font-family="Liberation Sans" textLength="3" lengthAdjust="spacingAndGlyphs">1</text><circle cx="622.2" cy="65" r="1" fill="#3a92d8"/>
<rect x="622.50" y="58.00" width="5.80" height="0.8" fill="#6e6e6e"/><rect x="622.50" y="60.10" width="3.20" height="0.8" fill="#6e6e6e"/>
<rect x="624.40" y="64.00" width="3.40" height="0.8" fill="#6e6e6e"/><rect x="624.40" y="66.00" width="1.00" height="0.8" fill="#6e6e6e"/>
<path d="M632.40 62.30H637.00L634.70 64.80Z" fill="#111"/>
<rect x="641.10" y="59" width="1" height="7.5" fill="#b8b8b8"/>
<rect x="649.00" y="58.00" width="8.10" height="1.0" fill="#5c5c5c"/>
<rect x="653.00" y="61.00" width="4.10" height="1.0" fill="#5c5c5c"/><rect x="653.00" y="63.80" width="4.10" height="1.0" fill="#5c5c5c"/>
<rect x="649.00" y="66.10" width="8.10" height="1.4" fill="#8e8e8e"/>
<path d="M647.2 62.2H651.2M649.4 60.2L651.5 62.2L649.4 64.2" fill="none" stroke="#3a92d8" stroke-width="1.2"/>
<rect x="664.30" y="58.00" width="8.60" height="1.0" fill="#5c5c5c"/>
<rect x="668.40" y="61.00" width="4.50" height="1.0" fill="#5c5c5c"/><rect x="668.40" y="63.80" width="4.50" height="1.0" fill="#5c5c5c"/>
<rect x="664.30" y="66.10" width="8.60" height="1.4" fill="#8e8e8e"/>
<path d="M667.4 62.2H663.4M665.2 60.2L663.1 62.2L665.2 64.2" fill="none" stroke="#3a92d8" stroke-width="1.2"/>
<rect x="678.10" y="59" width="1" height="7.5" fill="#b8b8b8"/>
<path d="M685.3 61.6V57.599999999999994M683.3 59.4L685.3 57.4L687.3 59.4" fill="none" stroke="#3a92d8" stroke-width="1.1"/>
<path d="M685.3 63.2V67.60000000000001M683.3 65.80000000000001L685.3 67.80000000000001L687.3 65.80000000000001" fill="none" stroke="#3a92d8" stroke-width="1.1"/>
<rect x="688.20" y="59.10" width="5.50" height="0.8" fill="#5c5c5c"/><rect x="688.20" y="61.00" width="5.50" height="0.8" fill="#5c5c5c"/><rect x="688.20" y="63.00" width="5.50" height="0.8" fill="#5c5c5c"/><rect x="688.20" y="65.10" width="5.50" height="0.8" fill="#5c5c5c"/>
<path d="M698.00 62.30H702.10L700.05 64.80Z" fill="#111"/>
<rect x="707.90" y="58.30" width="4.90" height="1.2" fill="#5a5a5a"/><rect x="707.90" y="59.60" width="4.90" height="1.2" fill="#777"/>
<rect x="707.90" y="65.00" width="4.90" height="1.2" fill="#5a5a5a"/><rect x="707.90" y="66.30" width="4.90" height="1.2" fill="#777"/>
<path d="M715.6 61.6V57.599999999999994M713.6 59.4L715.6 57.4L717.6 59.4" fill="none" stroke="#3a92d8" stroke-width="1.1"/>
<path d="M715.6 63.2V67.60000000000001M713.6 65.80000000000001L715.6 67.80000000000001L717.6 65.80000000000001" fill="none" stroke="#3a92d8" stroke-width="1.1"/>
<rect x="723.50" y="59.95" width="5.00" height="0.9" fill="#c4c4c4"/><rect x="723.50" y="60.95" width="5.00" height="0.9" fill="#cfcfcf"/><rect x="723.50" y="63.95" width="5.00" height="0.9" fill="#c4c4c4"/><rect x="723.50" y="64.95" width="5.00" height="0.9" fill="#cfcfcf"/>
<path d="M731.4 57.3V61.300000000000004M729.4 59.5L731.4 61.5L733.4 59.5" fill="none" stroke="#c2c2c2" stroke-width="0.9"/>
<path d="M731.4 67.9V63.699999999999996M729.4 65.5L731.4 63.5L733.4 65.5" fill="none" stroke="#c2c2c2" stroke-width="0.9"/>
<rect x="1011" y="21" width="11" height="11" fill="#fdfdfd"/>
<path d="M1014 24.2L1018.8 29M1018.8 24.2L1014 29" stroke="#333" stroke-width="0.9"/>
<rect x="1" y="19.3" width="1022" height="1" fill="#f2f2f2" opacity="0.6"/>
<rect x="1003" y="76.2" width="13.5" height="12.7" fill="#fff"/>
<path d="M1006 80.3H1013M1006 82.3H1013M1006 84.3H1013" stroke="#333" stroke-width="0.8"/>
<g transform="translate(1003.4,95.8)"><rect x="0.5" y="0.5" width="12.4" height="13" rx="1.2" fill="#fff" stroke="#505050" stroke-width="1"/><rect x="0.5" y="0.5" width="12.4" height="2.6" fill="#505050"/><path d="M2.2 6.6H11.2M2.2 9.2H11.2" stroke="#8a8a8a" stroke-width="0.8"/><circle cx="8.1" cy="6.6" r="1.1" fill="#3a92d8"/><circle cx="6" cy="9.2" r="1.1" fill="#3a92d8"/></g>
<g transform="translate(1003.8,117)"><path d="M0.6 10.8L4.3 0.6L8 10.8M2 7.2H6.6" fill="none" stroke="#333" stroke-width="1.2"/><path d="M13.6 4.5L8.4 10.8" stroke="#444" stroke-width="2.8" stroke-linecap="round"/><path d="M13.6 4.5L8.4 10.8" stroke="#fff" stroke-width="1.2" stroke-linecap="round"/><path d="M4.6 13.4L7.6 11.2" stroke="#3a92d8" stroke-width="2.8" stroke-linecap="round"/></g>
<g transform="translate(1003,138.2)"><path d="M0.6 12.6V0.6H4.6L5.8 1.8H12.2V3.6" fill="#fde9cc" stroke="#f3a04a" stroke-width="1"/><path d="M0.6 12.6L2.2 3.8H15.4L13.8 12.6Z" fill="#fbd48e" stroke="#f3a04a" stroke-width="1"/><rect x="5.3" y="4.8" width="9.2" height="9" fill="#fff" stroke="#555" stroke-width="1"/><circle cx="7.6" cy="6.9" r="0.9" fill="#f29b39"/><path d="M5.8 13.3V11L8.3 9L10.2 10.6L12.4 8.6L14 10V13.3Z" fill="#5aa6e6"/></g>
<g transform="translate(1003.8,159.1)"><circle cx="6.6" cy="6.6" r="6" fill="#fff" stroke="#666" stroke-width="1.2"/><path d="M10.2 3L8.6 8.6L3 10.2L4.6 4.6Z" fill="#3a92d8"/><circle cx="6.6" cy="6.6" r="0.9" fill="#fff"/></g>
<g transform="translate(1005.1,180.3)"><path d="M0.5 0.5H7.2L10.1 3.4V12.8H0.5Z" fill="#fff" stroke="#505050" stroke-width="1" stroke-linejoin="round"/><path d="M7 0.4V3.6H10.2Z" fill="#505050"/></g>
<g transform="translate(1003.5,202)"><path d="M0.4 2.8Q4.2 -0.8 8.4 2.2" fill="none" stroke="#444" stroke-width="1"/><circle cx="5" cy="3.9" r="2.1" fill="#fff" stroke="#444" stroke-width="0.8"/><circle cx="5" cy="3.9" r="1.3" fill="#3a92d8"/><path d="M13.8 3L8.8 9.6" stroke="#444" stroke-width="2.8" stroke-linecap="round"/><path d="M13.8 3L8.8 9.6" stroke="#fff" stroke-width="1.2" stroke-linecap="round"/><path d="M4.8 12.6L7.8 10.2" stroke="#3a92d8" stroke-width="2.8" stroke-linecap="round"/></g>
<g transform="translate(1004.8,222.2)"><path d="M0.5 0.5H7.4L10.4 3.5V13H0.5Z" fill="#fff" stroke="#505050" stroke-width="1" stroke-linejoin="round"/><path d="M2 3H5M2 5.2H4M4.6 5.2H7.4M2 7H6M2 8.8H5M2 10.6H3.4" stroke="#999" stroke-width="0.7"/><path d="M4.6 5.2H7.4M2 7H6M2 10.6H3.4" stroke="#f29b39" stroke-width="0.8"/><path d="M5.2 14.2L5.8 11.6L11.4 6L13.4 8L7.8 13.6Z" fill="#3a92d8"/></g>
<g transform="translate(1004.8,243)"><path d="M0.5 0.5H7.2L10.4 3.7V13.5H0.5Z" fill="#fff" stroke="#505050" stroke-width="1" stroke-linejoin="round"/><path d="M7 0.4V3.9H10.5Z" fill="#505050"/><circle cx="9" cy="7" r="1.5" fill="#3a92d8"/><path d="M4.6 9.5H13.4" stroke="#3a92d8" stroke-width="2"/><rect x="7.2" y="9" width="3.6" height="4.6" fill="#3a92d8"/><path d="M7.6 13.4V15.3M10.4 13.4V15.3" stroke="#3a92d8" stroke-width="1.6"/><rect x="8.5" y="10.6" width="1" height="2.2" fill="#fff"/></g>
<g transform="translate(1003.5,264.2)"><circle cx="8.5" cy="4.7" r="4.1" fill="#fff" stroke="#3a92d8" stroke-width="1.1"/><path d="M5.6 7.6L0.8 12.6" stroke="#3a92d8" stroke-width="1.4" stroke-linecap="round"/></g>
<g transform="translate(6.8,507.7)"><path d="M0.5 0.5H9.6L10.7 1.6V10.2H0.5Z" fill="none" stroke="#8a8a8a" stroke-width="0.9"/><path d="M2.6 0.6V3.6H8.2V0.6M2.4 10.2V6.6H8.6V10.2" fill="none" stroke="#8a8a8a" stroke-width="0.8"/></g>
<rect x="696.8" y="510.7" width="10.6" height="6.1" rx="0.6" fill="none" stroke="#4a96d4" stroke-width="1.1"/>
<path d="M712.9 508.5V519.2M711 508.6H714.8M711 519.1H714.8" stroke="#555" stroke-width="1.1"/>
<path d="M842.3 508.2H848.6L850.9 510.5V519.2H842.3Z" fill="#0f68c0"/><circle cx="848.9" cy="510.2" r="0.7" fill="#fff"/>
<path d="M855 508.6H859.8L862.4 511.2V518.9H855Z M863.6 508.6H868.8L871.6 511.4V518.9H863.6Z" fill="none" stroke="#5a5a5a" stroke-width="1"/>
<path d="M859.8 508.6V511.2H862.4M868.8 508.6V511.4H871.6" fill="none" stroke="#5a5a5a" stroke-width="0.8"/>
<path d="M878.6 508.6H883.6V518.9H876.3V510.9Z M883.6 508.6H888.8L891.6 511.4V518.9H883.6Z" fill="none" stroke="#5a5a5a" stroke-width="1"/>
<path d="M878.6 508.6V510.9H876.3M888.8 508.6V511.4H891.6" fill="none" stroke="#5a5a5a" stroke-width="0.8"/>
<rect x="902.3" y="513.4" width="7" height="1.2" fill="#333"/>
<rect x="912.5" y="513.6" width="65.5" height="1.1" fill="#2a2a2a"/>
<rect x="924.8" y="512.4" width="1.4" height="3.4" rx="0.6" fill="#111"/>
<rect x="944" y="510.2" width="2.9" height="7.4" rx="1.4" fill="#d4d4d4" stroke="#666" stroke-width="0.8"/>
<path d="M981.8 514H989.3M985.55 510.2V517.8" stroke="#333" stroke-width="1.1"/>
</svg>
</body></html>
